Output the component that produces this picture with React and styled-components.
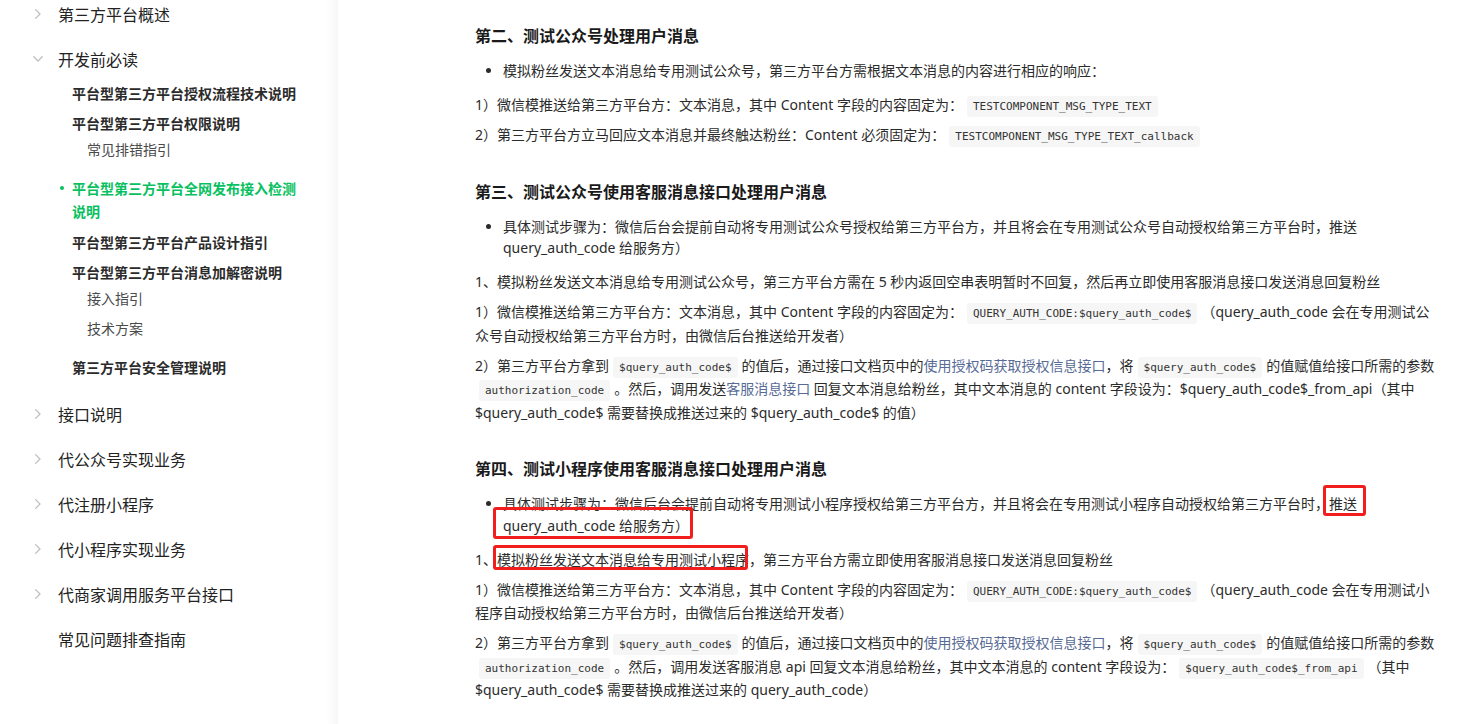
import React from 'react';
import styled, { createGlobalStyle } from 'styled-components';

const Global = createGlobalStyle`
  html, body { margin: 0; padding: 0; background: #fff; }
  body {
    font-family: "Noto Sans", "Noto Sans CJK SC", sans-serif;
    color: #2b2b2b;
    overflow: hidden;
  }
`;

const Page = styled.div`
  position: relative;
  display: flex;
  width: 1484px;
  height: 724px;
  overflow: hidden;
`;

const Sidebar = styled.nav`
  width: 338px;
  flex-shrink: 0;
  height: 724px;
  background: linear-gradient(to right, #fff 326px, #f7f7f7 338px);
  font-family: "Noto Sans CJK SC", sans-serif;
`;

const NavList = styled.ul`
  list-style: none;
  margin: -9px 0 0;
  padding: 0;
`;

const TopItem = styled.li``;

const TopRow = styled.div`
  display: flex;
  align-items: center;
  height: 45px;
  padding-left: 33px;
  font-size: 16px;
  color: #222;
`;

const ChevronBox = styled.span`
  display: flex;
  align-items: center;
  width: 25px;
  height: 12px;
`;

const SubList = styled.ul`
  list-style: none;
  margin: -3.5px 0 9.5px;
  padding: 0;
`;

const SubLabel = styled.div`
  position: relative;
  padding: 4px 36px 4px 72px;
  font-size: 14px;
  font-weight: 700;
  line-height: ${p => (p.$active ? '23px' : '22px')};
  color: ${p => (p.$active ? '#07c160' : '#2b2b2b')};
  ${p =>
    p.$active &&
    `&::before {
      content: "";
      position: absolute;
      left: 60px;
      top: 13.5px;
      width: 4px;
      height: 4px;
      border-radius: 50%;
      background: #07c160;
    }`}
`;

const ThirdList = styled.ul`
  list-style: none;
  margin: -4px 0 9px;
  padding: 0;
`;

const ThirdItem = styled.li`
  height: 30px;
  line-height: 30px;
  padding-left: 87px;
  font-size: 14px;
  color: #4a4a4a;
`;

const Main = styled.main`
  flex: 1;
  padding: 24px 0 0 137px;
`;

const Article = styled.article`
  width: 960px;
  font-size: 14px;
`;

const H3 = styled.h3`
  margin: ${p => (p.$first ? '0' : '33px')} 0 12px;
  font-family: "Noto Sans", "Noto Sans CJK SC", sans-serif;
  font-size: 16px;
  line-height: 24px;
  font-weight: 700;
  color: #1a1a1a;
`;

const Bullets = styled.ul`
  margin: 0 0 11.5px;
  padding-left: 28px;
  line-height: 21.5px;
`;

const P = styled.p`
  margin: 0 0 6.5px;
  line-height: 23.5px;
`;

const Code = styled.code`
  font-family: "DejaVu Sans Mono", monospace;
  font-size: 11px;
  line-height: 1;
  color: #333;
  background: #f6f6f6;
  padding: 4px 6px;
  border-radius: 3px;
  margin: 0 4px;
`;

const Link = styled.a`
  color: #576b95;
  text-decoration: none;
`;

const Annot = styled.div`
  position: absolute;
  border: 3px solid #f21d1d;
  border-radius: 3px;
  box-sizing: border-box;
  pointer-events: none;
`;

const Chevron = ({ open }) => (
  <svg width="10" height="10" viewBox="0 0 10 10" fill="none" stroke="#bfbfbf" strokeWidth="1.3" strokeLinecap="round" strokeLinejoin="round">
    {open ? <path d="M0.8 2.8 L5 7 L9.2 2.8" /> : <path d="M2.6 0.6 L7 5 L2.6 9.4" />}
  </svg>
);

const Top = ({ label, open, noIcon, children }) => (
  <TopItem>
    <TopRow>
      <ChevronBox>{!noIcon && <Chevron open={open} />}</ChevronBox>
      <span>{label}</span>
    </TopRow>
    {children}
  </TopItem>
);

export default function App() {
  return (
    <Page>
      <Global />
      <Sidebar>
        <NavList>
          <Top label="第三方平台概述" />
          <Top label="开发前必读" open>
            <SubList>
              <li><SubLabel>平台型第三方平台授权流程技术说明</SubLabel></li>
              <li>
                <SubLabel>平台型第三方平台权限说明</SubLabel>
                <ThirdList>
                  <ThirdItem>常见排错指引</ThirdItem>
                </ThirdList>
              </li>
              <li><SubLabel $active>平台型第三方平台全网发布接入检测说明</SubLabel></li>
              <li><SubLabel>平台型第三方平台产品设计指引</SubLabel></li>
              <li>
                <SubLabel>平台型第三方平台消息加解密说明</SubLabel>
                <ThirdList>
                  <ThirdItem>接入指引</ThirdItem>
                  <ThirdItem>技术方案</ThirdItem>
                </ThirdList>
              </li>
              <li><SubLabel>第三方平台安全管理说明</SubLabel></li>
            </SubList>
          </Top>
          <Top label="接口说明" />
          <Top label="代公众号实现业务" />
          <Top label="代注册小程序" />
          <Top label="代小程序实现业务" />
          <Top label="代商家调用服务平台接口" />
          <Top label="常见问题排查指南" noIcon />
        </NavList>
      </Sidebar>

      <Main>
        <Article>
          <H3 $first>第二、测试公众号处理用户消息</H3>
          <Bullets>
            <li>模拟粉丝发送文本消息给专用测试公众号，第三方平台方需根据文本消息的内容进行相应的响应：</li>
          </Bullets>
          <P>1）微信模推送给第三方平台方：文本消息，其中 Content 字段的内容固定为：<Code>TESTCOMPONENT_MSG_TYPE_TEXT</Code></P>
          <P>2）第三方平台方立马回应文本消息并最终触达粉丝：Content 必须固定为：<Code>TESTCOMPONENT_MSG_TYPE_TEXT_callback</Code></P>

          <H3>第三、测试公众号使用客服消息接口处理用户消息</H3>
          <Bullets>
            <li>具体测试步骤为：微信后台会提前自动将专用测试公众号授权给第三方平台方，并且将会在专用测试公众号自动授权给第三方平台时，推送 query_auth_code 给服务方）</li>
          </Bullets>
          <P>1、模拟粉丝发送文本消息给专用测试公众号，第三方平台方需在 5 秒内返回空串表明暂时不回复，然后再立即使用客服消息接口发送消息回复粉丝</P>
          <P>1）微信模推送给第三方平台方：文本消息，其中 Content 字段的内容固定为：<Code>QUERY_AUTH_CODE:$query_auth_code$</Code>（query_auth_code 会在专用测试公众号自动授权给第三方平台方时，由微信后台推送给开发者）</P>
          <P>2）第三方平台方拿到<Code>$query_auth_code$</Code>的值后，通过接口文档页中的<Link>使用授权码获取授权信息接口</Link>，将<Code>$query_auth_code$</Code>的值赋值给接口所需的参数<Code>authorization_code</Code>。然后，调用发送<Link>客服消息接口</Link> 回复文本消息给粉丝，其中文本消息的 content 字段设为：$query_auth_code$_from_api（其中 $query_auth_code$ 需要替换成推送过来的 $query_auth_code$ 的值）</P>

          <H3>第四、测试小程序使用客服消息接口处理用户消息</H3>
          <Bullets>
            <li>具体测试步骤为：微信后台会提前自动将专用测试小程序授权给第三方平台方，并且将会在专用测试小程序自动授权给第三方平台时，推送 query_auth_code 给服务方）</li>
          </Bullets>
          <P>1、模拟粉丝发送文本消息给专用测试小程序，第三方平台方需立即使用客服消息接口发送消息回复粉丝</P>
          <P>1）微信模推送给第三方平台方：文本消息，其中 Content 字段的内容固定为：<Code>QUERY_AUTH_CODE:$query_auth_code$</Code>（query_auth_code 会在专用测试小程序自动授权给第三方平台方时，由微信后台推送给开发者）</P>
          <P>2）第三方平台方拿到<Code>$query_auth_code$</Code>的值后，通过接口文档页中的<Link>使用授权码获取授权信息接口</Link>，将<Code>$query_auth_code$</Code>的值赋值给接口所需的参数<Code>authorization_code</Code>。然后，调用发送客服消息 api 回复文本消息给粉丝，其中文本消息的 content 字段设为：<Code>$query_auth_code$_from_api</Code>（其中 $query_auth_code$ 需要替换成推送过来的 query_auth_code）</P>
        </Article>
      </Main>

      <Annot style={{ left: 1323, top: 485, width: 43, height: 31 }} />
      <Annot style={{ left: 493, top: 507, width: 200, height: 32 }} />
      <Annot style={{ left: 493, top: 545, width: 255, height: 25 }} />
    </Page>
  );
}
